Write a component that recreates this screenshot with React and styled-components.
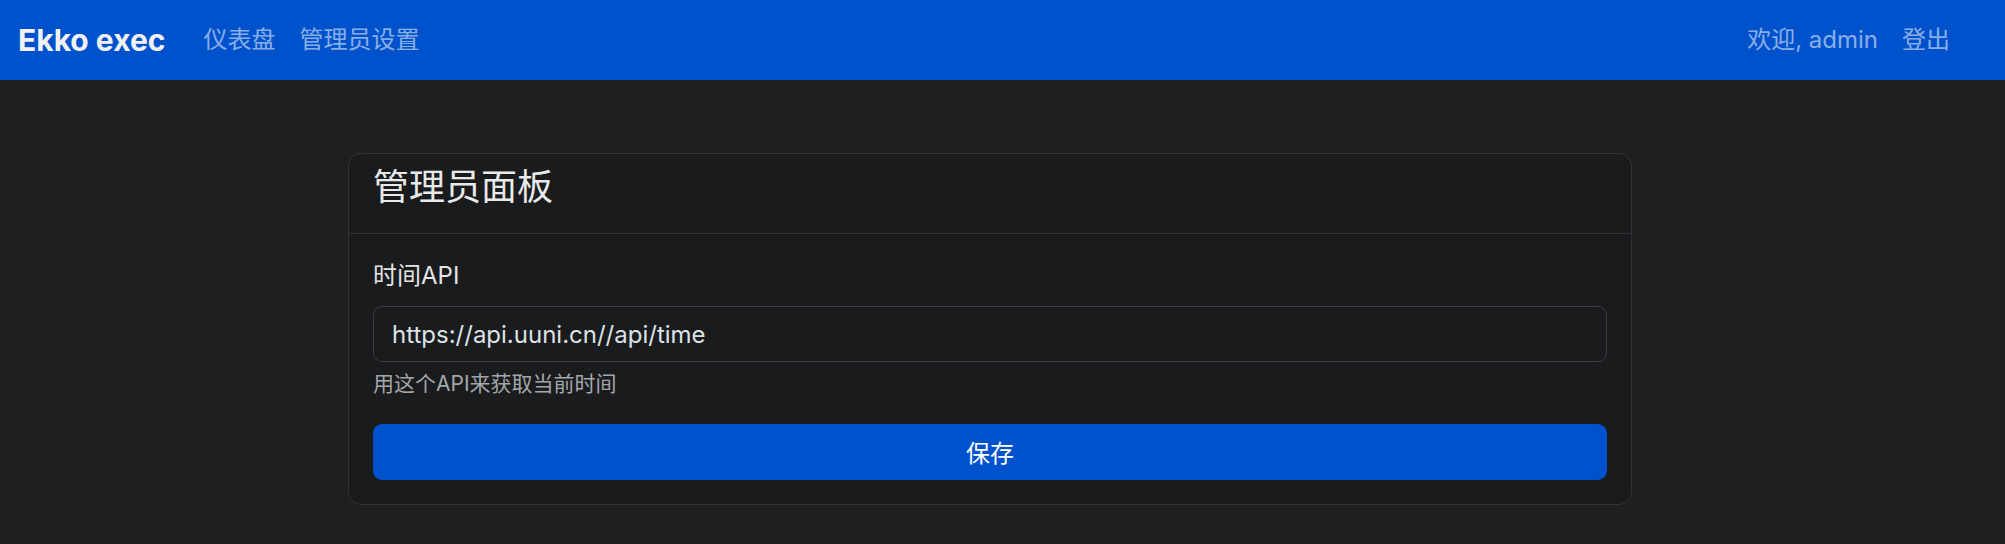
import styled, { createGlobalStyle } from "styled-components";

const GlobalStyle = createGlobalStyle`
  html, body {
    margin: 0;
    padding: 0;
    background: #1e1f21;
  }
  body {
    font-family: Inter, "Noto Sans CJK SC", sans-serif;
    font-size: 24px;
    line-height: 1.5;
    color: #dee2e6;
  }
  * {
    box-sizing: border-box;
  }
`;

const Page = styled.div`
  min-height: 544px;
  background: #1e1f21;
`;

const Navbar = styled.nav`
  display: flex;
  align-items: center;
  height: 80px;
  padding: 0 43px 0 18px;
  background: #0052cc;
`;

const Brand = styled.a`
  font-size: 30px;
  font-weight: 700;
  color: #f1f1f1;
  margin-right: 26px;
`;

const NavList = styled.div`
  display: flex;
  align-items: center;
  margin-right: ${(p) => (p.$grow ? "auto" : "0")};
`;

const NavLink = styled.a`
  padding: 12px;
  font-size: 24px;
  color: rgba(255, 255, 255, 0.55);
  text-decoration: none;
  cursor: pointer;
`;

const Main = styled.main`
  padding: 73px 0 40px 348px;
`;

const Card = styled.section`
  width: 1284px;
  background: #1a1b1d;
  border: 1px solid #303235;
  border-radius: 13px;
  overflow: hidden;
`;

const CardHeader = styled.div`
  padding: 12px 24px;
  border-bottom: 1px solid #303235;
`;

const Title = styled.h4`
  margin: 0 0 12px;
  font-size: 36px;
  font-weight: 400;
  line-height: 1.2;
  color: #e8e9ea;
`;

const CardBody = styled.div`
  padding: 24px;
`;

const Group = styled.div`
  margin-bottom: 24px;
`;

const Label = styled.label`
  display: block;
  margin-bottom: 12px;
  font-size: 24px;
  color: #e2e4e6;
`;

const Input = styled.input`
  display: block;
  width: 100%;
  height: 56px;
  padding: 9px 18px;
  font-family: inherit;
  font-size: 24px;
  color: #dee2e6;
  background: #1a1b1d;
  border: 1px solid #3a3d41;
  border-radius: 9px;
  outline: none;
`;

const Help = styled.div`
  margin-top: 6px;
  font-size: 21px;
  color: #a3a7ab;
`;

const Button = styled.button`
  display: block;
  width: 100%;
  height: 56px;
  font-family: inherit;
  font-size: 24px;
  color: #fff;
  background: #0052cc;
  border: none;
  border-radius: 9px;
  cursor: pointer;
`;

export default function App() {
  return (
    <Page>
      <GlobalStyle />
      <Navbar>
        <Brand>Ekko exec</Brand>
        <NavList $grow>
          <NavLink>仪表盘</NavLink>
          <NavLink>管理员设置</NavLink>
        </NavList>
        <NavList>
          <NavLink>欢迎, admin</NavLink>
          <NavLink>登出</NavLink>
        </NavList>
      </Navbar>
      <Main>
        <Card>
          <CardHeader>
            <Title>管理员面板</Title>
          </CardHeader>
          <CardBody>
            <Group>
              <Label>时间API</Label>
              <Input defaultValue="https://api.uuni.cn//api/time" />
              <Help>用这个API来获取当前时间</Help>
            </Group>
            <Button>保存</Button>
          </CardBody>
        </Card>
      </Main>
    </Page>
  );
}
